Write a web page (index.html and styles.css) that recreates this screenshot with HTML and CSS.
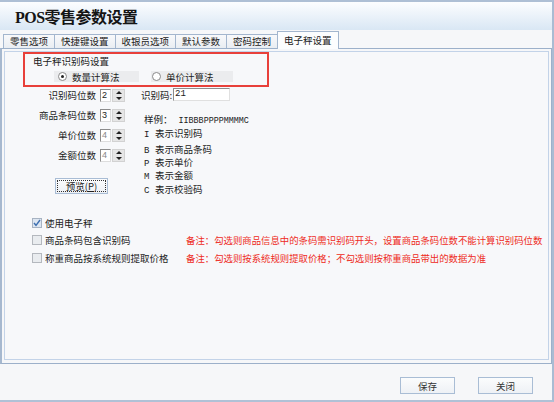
FILE: index.html
```html
<!DOCTYPE html>
<html lang="zh-CN">
<head>
    <meta charset="UTF-8">
    <title>POS零售参数设置</title>
    <link rel="stylesheet" href="styles.css">
</head>
<body>
    <div class="window">
        <div class="header">
            <h1 class="title">POS零售参数设置</h1>
        </div>
        <div class="tabs">
            <div class="tab">零售选项</div>
            <div class="tab">快捷键设置</div>
            <div class="tab">收银员选项</div>
            <div class="tab">默认参数</div>
            <div class="tab">密码控制</div>
            <div class="tab active">电子秤设置</div>
        </div>
        <div class="panel">
            <div class="panel-inner">
                <div class="group">
                    <div class="group-title">电子秤识别码设置</div>
                    <div class="radios">
                        <div class="radio-item first"><span class="radio checked"></span>数量计算法</div>
                        <div class="radio-item"><span class="radio"></span>单价计算法</div>
                    </div>
                </div>

                <div class="form">
                    <div class="left">
                        <div class="fields">
                            <label>识别码位数</label>
                            <div class="spin"><span class="spin-val">2</span><span class="spin-btn"></span></div>
                            <label>商品条码位数</label>
                            <div class="spin"><span class="spin-val">3</span><span class="spin-btn"></span></div>
                            <label>单价位数</label>
                            <div class="spin"><span class="spin-val dim">4</span><span class="spin-btn"></span></div>
                            <label>金额位数</label>
                            <div class="spin"><span class="spin-val dim">4</span><span class="spin-btn"></span></div>
                        </div>
                        <button class="btn preview"><span class="focus">预览(<u>P</u>)</span></button>
                    </div>
                    <div class="right">
                        <div class="code-row">
                            <label>识别码:</label>
                            <span class="text-input">21</span>
                        </div>
                        <div class="legend">
                            <div class="line">样例：<span class="code">IIBBBPPPPMMMMC</span></div>
                            <div class="line i"><span class="key">I</span>表示识别码</div>
                            <div class="line b"><span class="key">B</span>表示商品条码</div>
                            <div class="line"><span class="key">P</span>表示单价</div>
                            <div class="line"><span class="key">M</span>表示金额</div>
                            <div class="line c"><span class="key">C</span>表示校验码</div>
                        </div>
                    </div>
                </div>

                <div class="checks">
                    <div class="check-label"><span class="box checked"><svg width="8" height="8" viewBox="0 0 8 8"><path d="M1 4 L3 6.3 L7 1" fill="none" stroke="#3d6fb0" stroke-width="1.4"/></svg></span>使用电子秤</div>
                    <div></div>
                    <div class="check-label"><span class="box"></span>商品条码包含识别码</div>
                    <div class="note">备注：勾选则商品信息中的条码需识别码开头，设置商品条码位数不能计算识别码位数</div>
                    <div class="check-label"><span class="box"></span>称重商品按系统规则提取价格</div>
                    <div class="note">备注：勾选则按系统规则提取价格；不勾选则按称重商品带出的数据为准</div>
                </div>
            </div>
        </div>
        <div class="footer">
            <button class="btn">保存</button>
            <button class="btn">关闭</button>
        </div>
    </div>
</body>
</html>
```

FILE: styles.css
```css
body { margin: 0; background: #f6f7f9; font-family: "Noto Sans CJK SC", sans-serif; font-size: 9.5px; color: #1c1c1c; }
.window { width: 554px; height: 402px; box-sizing: border-box; border-top: 2px solid #aebfd5; border-right: 2px solid #a9bcd3; border-bottom: 2px solid #b0c1d6; background: #f6f7f9; display: flex; flex-direction: column; }

.header { height: 28px; flex: none; background: linear-gradient(#fcfdff, #d9e7f4); display: flex; align-items: center; padding-left: 15px; }
.title { margin: 0; font-family: "Liberation Serif", "Noto Sans CJK SC", serif; font-size: 16px; font-weight: bold; color: #151515; letter-spacing: -0.5px; }

.tabs { height: 18px; flex: none; display: flex; align-items: flex-end; padding-left: 3px; }
.tab { height: 13px; line-height: 13px; padding: 0 6px; border: 1px solid #a3b6ce; border-bottom: none; margin-left: -1px; background: linear-gradient(#f8f9fb, #e9edf2); color: #222; white-space: nowrap; }
.tab:first-child { margin-left: 0; }
.tab.active { height: 17px; line-height: 17px; background: #fcfdfe; margin-bottom: -1px; position: relative; z-index: 1; }

.panel { height: 316px; flex: none; box-sizing: border-box; border: 1px solid #9cb0ca; border-left: 2px solid #a6b8cf; padding: 2px 2px 3px 2px; background: #f6f7f9; }
.panel-inner { height: 100%; box-sizing: border-box; border: 1px solid #c3d3e8; background: #f7f8fa; padding: 0 0 0 1px; }

.group { margin-left: 17px; width: 246px; height: 35px; box-sizing: border-box; border: 2px solid #e8403a; padding-left: 8px; }
.group-title { margin-top: 1px; line-height: 12px; }
.radios { display: flex; gap: 12px; margin: 4px 0 0 21px; }
.radio-item { display: flex; align-items: center; height: 11px; width: 85px; box-sizing: border-box; padding-left: 4px; gap: 5px; background: #ebecee; }
.radio-item + .radio-item { width: 82px; padding-left: 1px; }
.radio { width: 7px; height: 7px; border: 1px solid #8a8a8a; border-radius: 50%; background: #fff; display: flex; align-items: center; justify-content: center; }
.radio.checked::after { content: ""; width: 3px; height: 3px; border-radius: 50%; background: #222; }

.form { display: flex; margin-top: 1px; }
.left { width: 120px; }
.fields { display: grid; grid-template-columns: 90px 26px; column-gap: 4px; row-gap: 7px; margin-top: 1px; align-items: center; }
.fields label { text-align: right; line-height: 13px; }
.spin { display: flex; height: 13px; }
.spin-val { width: 11px; box-sizing: border-box; border: 1px solid #8c8c8c; border-right-color: #ddd; border-bottom-color: #ddd; background: #fff; line-height: 11px; padding-left: 1px; font-family: "Liberation Sans", sans-serif; font-size: 9px; }
.spin-val.dim { color: #888; }
.spin-btn { width: 13px; margin-left: 1px; background: #e6e6e6; border: 1px solid #d2d2d2; box-sizing: border-box; position: relative; }
.spin-btn::before, .spin-btn::after { content: ""; position: absolute; left: 3px; border-left: 3px solid transparent; border-right: 3px solid transparent; }
.spin-btn::before { top: 1px; border-bottom: 3px solid #222; }
.spin-btn::after { bottom: 1px; border-top: 3px solid #222; }

.btn { font-family: "Noto Sans CJK SC", sans-serif; font-size: 9.5px; color: #333; width: 55px; height: 17px; padding: 0; border: 1px solid #a9bdd5; background: linear-gradient(#fbfcfd, #eef1f5); }
.preview { width: 53px; height: 16px; margin: 16px 0 0 49px; display: flex; padding: 1px; color: #222; }
.focus { flex: 1; border: 1px dotted #333; line-height: 11px; }
.preview u { text-decoration: underline; }

.right { margin-left: 15px; }
.code-row { display: flex; align-items: center; height: 13px; }
.code-row label { width: 32px; white-space: nowrap; }
.text-input { width: 57px; height: 13px; box-sizing: border-box; border: 1px solid #8c8c8c; border-right-color: #e0e0e0; border-bottom-color: #e0e0e0; background: #fff; line-height: 11px; padding-left: 1px; font-family: "Liberation Mono", monospace; font-size: 9px; }
.legend { margin-top: 12px; padding-left: 3px; }
.line { display: flex; align-items: baseline; height: 13px; line-height: 13px; }
.line.i { margin-top: 1px; }
.line.b { margin-top: 3px; }
.line.c { margin-top: 1px; }
.code { margin-left: 6px; font-family: "Liberation Mono", monospace; font-size: 8.4px; }
.key { width: 11px; font-family: "Liberation Mono", monospace; font-size: 9px; }

.checks { display: grid; grid-template-columns: 154px auto; grid-auto-rows: 17.5px; align-items: center; margin: 18px 0 0 26px; }
.check-label { display: flex; align-items: center; gap: 3px; }
.box { width: 8px; height: 8px; border: 1px solid #b4b8be; background: #e9ecef; display: flex; align-items: center; justify-content: center; }
.box.checked { background: #dde6f1; border-color: #a7b3c2; }
.note { color: #ee2a22; white-space: nowrap; font-size: 9.4px; }

.footer { flex: 1; display: flex; justify-content: flex-end; align-items: flex-start; gap: 23px; padding: 13px 19px 0 0; }
```
